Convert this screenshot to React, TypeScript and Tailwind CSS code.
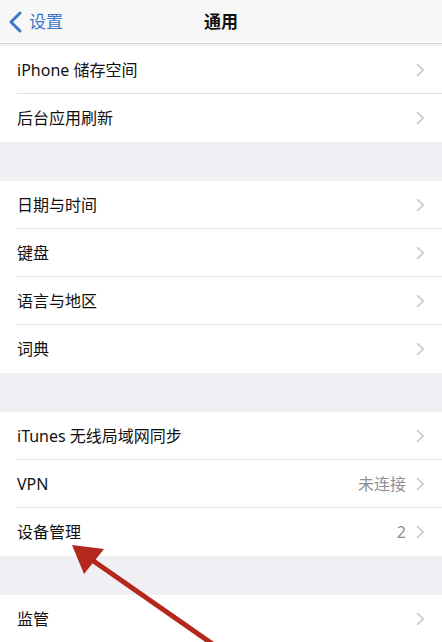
type Row = { label: string; detail?: string };

const groups: Row[][] = [
  [{ label: "iPhone 储存空间" }, { label: "后台应用刷新" }],
  [{ label: "日期与时间" }, { label: "键盘" }, { label: "语言与地区" }, { label: "词典" }],
  [{ label: "iTunes 无线局域网同步" }, { label: "VPN", detail: "未连接" }, { label: "设备管理", detail: "2" }],
  [{ label: "监管" }],
];

const font = { fontFamily: '"Noto Sans", "Noto Sans CJK SC", sans-serif' };

function Chevron() {
  return (
    <svg width="9" height="14" viewBox="0 0 9 14" fill="none">
      <path d="M1.5 1.5 L7.2 7 L1.5 12.5" stroke="#c4c4c8" strokeWidth="1.6" strokeLinecap="round" strokeLinejoin="round" />
    </svg>
  );
}

function SettingRow({ row, last }: { row: Row; last: boolean }) {
  return (
    <div className="flex h-12 items-center bg-white pl-[17px]">
      <div
        className={`flex h-full flex-1 items-center pr-[17px] ${
          last ? "" : "border-b border-[#e0e0e4]"
        }`}
      >
        <span className="flex-1 text-[16px] text-[#111]">{row.label}</span>
        {row.detail && <span className="mr-[10px] text-[16px] text-[#8e8e93]">{row.detail}</span>}
        <Chevron />
      </div>
    </div>
  );
}

export default function App() {
  return (
    <div className="relative h-[642px] w-[442px] overflow-hidden bg-[#efeff4]" style={font}>
      <div className="relative flex h-[44px] items-center justify-center border-b border-[#d6d6da] bg-[#f7f7f8]">
        <div className="absolute left-[8px] top-0 flex h-full items-center text-[#3d78c6]">
          <svg width="16" height="22" viewBox="0 0 16 22" fill="none">
            <path d="M12 2 L3 11 L12 20" stroke="currentColor" strokeWidth="3" strokeLinecap="round" strokeLinejoin="round" />
          </svg>
          <span className="ml-[5px] text-[17px]">设置</span>
        </div>
        <span className="text-[17px] font-bold text-[#111]">通用</span>
      </div>

      <div className="mt-[2px] flex flex-col gap-[39px]">
        {groups.map((g, gi) => (
          <div key={gi} className="flex flex-col">
            {g.map((row, ri) => (
              <SettingRow key={row.label} row={row} last={ri === g.length - 1} />
            ))}
          </div>
        ))}
      </div>

      {/* red annotation arrow */}
      <svg className="pointer-events-none absolute left-0 top-0" width="442" height="642">
        <line x1="214" y1="645" x2="82" y2="553" stroke="#b3271d" strokeWidth="5" />
        <polygon points="72,545 104,549 84,574" fill="#b3271d" />
      </svg>
    </div>
  );
}
